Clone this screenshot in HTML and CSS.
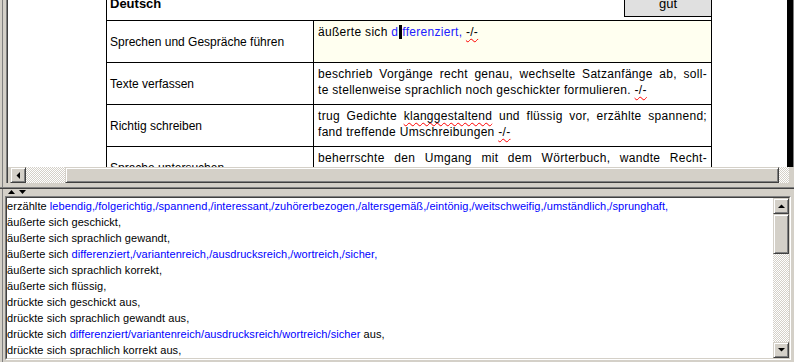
FILE: index.html
```html
<!DOCTYPE html>
<html lang="de">
<head>
<meta charset="utf-8">
<title>Zeugnis</title>
<link rel="stylesheet" href="styles.css">
</head>
<body>
<div class="app">
  <div class="top">
    <div class="frame-left"></div>
    <div class="top-main">
      <div class="doc">
        <div class="page">
          <div class="sheet">
            <div class="head">
              <span class="subject">Deutsch</span>
              <span class="grade">gut</span>
            </div>
            <div class="cell lc">Sprechen und Gespräche führen</div>
            <div class="cell rc active"><span class="ln">äußerte sich <span class="blue">d<span class="caret">i</span>fferenziert,</span> <span class="wavy">-/-</span></span></div>
            <div class="cell lc">Texte verfassen</div>
            <div class="cell rc"><span class="ln j">beschrieb Vorgänge recht genau, wechselte Satzanfänge ab, soll-</span><span class="ln">te stellenweise sprachlich noch geschickter formulieren. <span class="wavy">-/-</span></span></div>
            <div class="cell lc">Richtig schreiben</div>
            <div class="cell rc"><span class="ln j">trug Gedichte <span class="wavy">klanggestaltend</span> und flüssig vor, erzählte spannend;</span><span class="ln">fand treffende Umschreibungen <span class="wavy">-/-</span></span></div>
            <div class="cell lc">Sprache untersuchen</div>
            <div class="cell rc"><span class="ln j">beherrschte den Umgang mit dem Wörterbuch, wandte Recht-</span><span class="ln j">schreibregeln sicher an und erklärte Fachbegriffe treffend;</span></div>
          </div>
        </div>
        <div class="strip"></div>
        <div class="edge"></div>
      </div>
      <div class="hscroll">
        <div class="hs-gap"></div>
        <div class="sbtn"><svg width="4" height="7" viewBox="0 0 4 7"><polygon points="4,0 4,7 0.5,3.5" fill="#000"/></svg></div>
        <div class="track hs-t1"></div>
        <div class="thumb hs-thumb"></div>
        <div class="track hs-t2"></div>
      </div>
    </div>
  </div>
  <div class="splitter">
    <div class="split-lines"></div>
    <div class="arrows">
      <svg width="7" height="4" viewBox="0 0 7 4"><polygon points="0,4 7,4 3.5,0" fill="#000"/></svg>
      <svg width="7" height="4" viewBox="0 0 7 4"><polygon points="0,0 7,0 3.5,4" fill="#000"/></svg>
    </div>
  </div>
  <div class="bottom">
    <div class="list">
      <div class="list-inner">
        <div class="lines">
          <div class="row">erzählte <span class="blue">lebendig,/folgerichtig,/spannend,/interessant,/zuhörerbezogen,/altersgemäß,/eintönig,/weitschweifig,/umständlich,/sprunghaft,</span></div>
          <div class="row">äußerte sich geschickt,</div>
          <div class="row">äußerte sich sprachlich gewandt,</div>
          <div class="row">äußerte sich <span class="blue">differenziert,/variantenreich,/ausdrucksreich,/wortreich,/sicher,</span></div>
          <div class="row">äußerte sich sprachlich korrekt,</div>
          <div class="row">äußerte sich flüssig,</div>
          <div class="row">drückte sich geschickt aus,</div>
          <div class="row">drückte sich sprachlich gewandt aus,</div>
          <div class="row">drückte sich <span class="blue">differenziert/variantenreich/ausdrucksreich/wortreich/sicher</span> aus,</div>
          <div class="row">drückte sich sprachlich korrekt aus,</div>
        </div>
        <div class="vscroll">
          <div class="sbtn"><svg width="7" height="4" viewBox="0 0 7 4"><polygon points="0,4 7,4 3.5,0.5" fill="#000"/></svg></div>
          <div class="thumb vs-thumb"></div>
          <div class="track vs-track"></div>
          <div class="sbtn"><svg width="7" height="4" viewBox="0 0 7 4"><polygon points="0,0 7,0 3.5,3.5" fill="#000"/></svg></div>
        </div>
      </div>
    </div>
  </div>
</div>
</body>
</html>
```

FILE: styles.css
```css
* { box-sizing: border-box; }
html, body { margin: 0; padding: 0; }
body {
  background: #d4d0c8;
  font-family: "Liberation Sans", Arial, sans-serif;
  color: #000;
}
.app {
  width: 794px;
  height: 362px;
  overflow: hidden;
  display: flex;
  flex-direction: column;
  background: linear-gradient(to right, #d4d0c8 0 2px, #808080 2px 3px, #d4d0c8 3px);
}

/* ---------- top pane ---------- */
.top { height: 183px; flex: none; display: flex; }
.frame-left {
  width: 8px; flex: none;
  background: linear-gradient(to right, transparent 0 6px, #808080 6px 7px, #404040 7px 8px);
}
.top-main { flex: 1; min-width: 0; display: flex; flex-direction: column; }
.doc { height: 167px; flex: none; display: flex; }
.page { flex: 1; min-width: 0; background: #fff; overflow: hidden; }
.strip { width: 6px; flex: none; background: #000; }
.edge { width: 1px; flex: none; background: #808080; }

.sheet {
  margin: -10px 0 0 98px;
  width: 606px;
  display: grid;
  grid-template-columns: 207px 398px;
  grid-template-rows: 31px;
  grid-auto-rows: 42px;
  border-left: 1px solid #000;
}
.head {
  grid-column: 1 / -1;
  display: flex;
  justify-content: space-between;
  align-items: flex-end;
  border-right: 1px solid #000;
  border-bottom: 1px solid #000;
}
.subject {
  font-weight: bold;
  font-size: 13px;
  line-height: 16px;
  padding-left: 3px;
  margin-bottom: 8px;
}
.grade {
  width: 88px;
  height: 24px;
  margin: 0 -1px 3px 0;
  padding-top: 2px;
  border: 1px solid #000;
  background: #e0e0e0;
  text-align: center;
  font-size: 13px;
  line-height: 16px;
}
.cell {
  border-right: 1px solid #000;
  border-bottom: 1px solid #000;
  font-size: 12px;
  line-height: 16px;
}
.lc { display: flex; align-items: center; padding: 0 4px 0 3px; }
.rc { padding: 3px 4px 0 4px; letter-spacing: 0.3px; }
.active { background: #fffff0; }
.ln { display: block; white-space: nowrap; }
.ln.j { white-space: normal; text-align: justify; text-align-last: justify; }
.blue { color: #2020ff; }
.caret { background: #000; color: #000; margin-left: 1px; }
.wavy {
  text-decoration: underline wavy #ff0000;
  text-decoration-thickness: 1px;
  text-underline-offset: 2px;
}

/* ---------- scrollbars ---------- */
.sbtn {
  width: 16px; height: 16px; flex: none;
  display: flex; align-items: center; justify-content: center;
  background: #d4d0c8;
  border: 1px solid;
  border-color: #d4d0c8 #404040 #404040 #d4d0c8;
  box-shadow: inset 1px 1px #fff, inset -1px -1px #808080;
}
.thumb {
  background: #d4d0c8;
  border: 1px solid;
  border-color: #d4d0c8 #404040 #404040 #d4d0c8;
  box-shadow: inset 1px 1px #fff, inset -1px -1px #808080;
}
.track {
  background: repeating-conic-gradient(#ffffff 0 25%, #d4d0c8 0 50%) 0 0 / 2px 2px;
}
.hscroll { height: 16px; flex: none; display: flex; }
.hs-gap { width: 2px; flex: none; }
.hs-t1 { width: 39px; flex: none; }
.hs-thumb { width: 714px; flex: none; }
.hs-t2 { width: 10px; flex: none; }

/* ---------- splitter ---------- */
.splitter { height: 13px; flex: none; display: flex; flex-direction: column; }
.split-lines {
  height: 6px;
  background: linear-gradient(to bottom, transparent 0 4px, #808080 4px 5px, #404040 5px 6px);
}
.arrows { display: flex; gap: 4px; padding: 1px 0 0 8px; }
.arrows svg { display: block; }

/* ---------- bottom list ---------- */
.bottom { flex: none; height: 166px; padding: 0 3px 0 5px; }
.list {
  height: 164px;
  border: 1px solid;
  border-color: #808080 #ffffff #ffffff #808080;
}
.list-inner {
  height: 100%;
  display: flex;
  background: #fff;
  border: 1px solid;
  border-color: #404040 #d4d0c8 #d4d0c8 #404040;
}
.lines {
  flex: 1; min-width: 0;
  overflow: hidden;
  font-size: 11px;
  line-height: 16px;
  letter-spacing: 0.07px;
}
.row { white-space: nowrap; height: 16px; }
.lines .blue { color: #0000ff; }
.vscroll { width: 16px; flex: none; display: flex; flex-direction: column; }
.vs-thumb { height: 40px; flex: none; }
.vs-track { flex: 1; }
```
